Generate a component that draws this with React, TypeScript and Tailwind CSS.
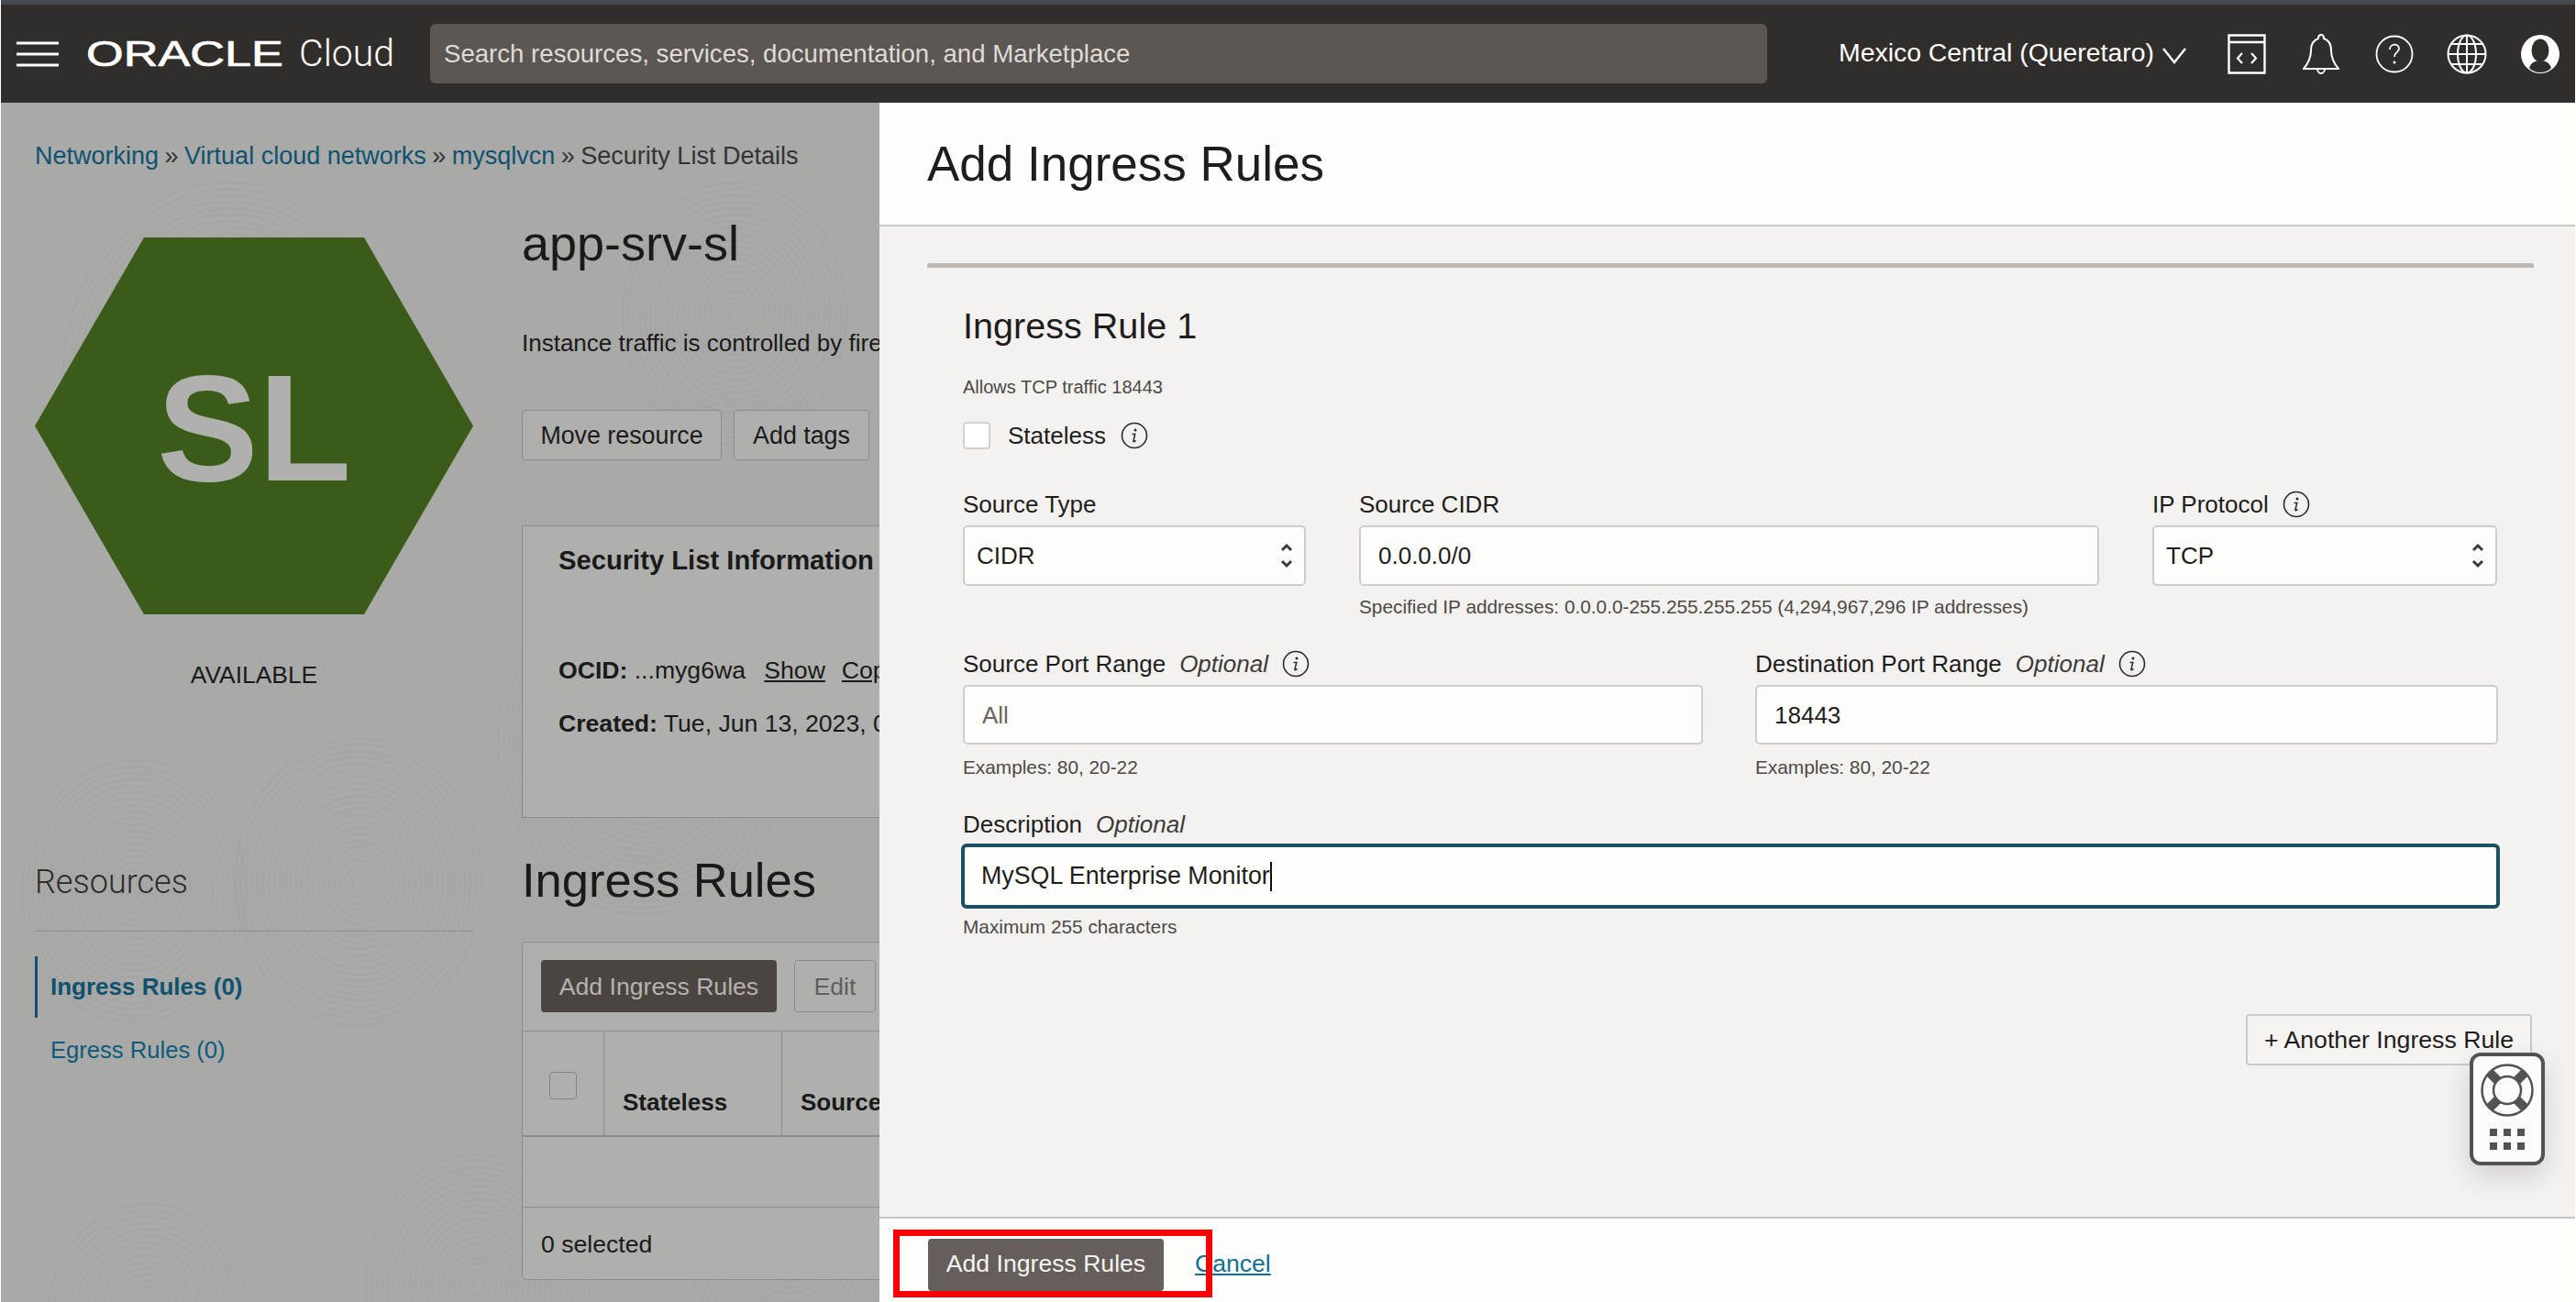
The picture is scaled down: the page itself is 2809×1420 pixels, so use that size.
const swirls = [
  { x: 145, y: 860, n: 20 },
  { x: 390, y: 850, n: 22 },
  { x: 160, y: 1330, n: 18 },
  { x: 520, y: 1290, n: 20 },
  { x: 700, y: 700, n: 26 },
  { x: 250, y: 300, n: 30 },
  { x: 860, y: 1240, n: 18 },
  { x: 800, y: 230, n: 20 },
];

function Swirls() {
  return (
    <svg className="absolute inset-0 h-full w-full" aria-hidden="true">
      {swirls.map((s) =>
        Array.from({ length: s.n }).map((_, i) => (
          <ellipse
            key={`${s.x}-${i}`}
            cx={s.x}
            cy={s.y}
            rx={8 + i * 6}
            ry={10 + i * 7}
            fill="none"
            stroke="#858583"
            strokeOpacity="0.07"
            strokeWidth="2.5"
          />
        )),
      )}
    </svg>
  );
}

function Info({ className = "" }: { className?: string }) {
  return (
    <svg viewBox="0 0 30 30" className={`h-[30px] w-[30px] shrink-0 ${className}`} aria-hidden="true">
      <circle cx="15" cy="15" r="13.5" fill="none" stroke="#2b2b2b" strokeWidth="1.6" />
      <circle cx="16" cy="9" r="1.5" fill="#2b2b2b" />
      <path d="M12.5 13.5h3.3l-1.9 7.5c-.2.9.9 1 2.6-.6" fill="none" stroke="#2b2b2b" strokeWidth="1.5" />
    </svg>
  );
}

function UpDown() {
  return (
    <svg viewBox="0 0 16 32" className="h-[32px] w-[16px]" aria-hidden="true">
      <path d="M3 10l5-5 5 5M3 22l5 5 5-5" fill="none" stroke="#3a3a3a" strokeWidth="3" />
    </svg>
  );
}

function Select({ value }: { value: string }) {
  return (
    <div className="flex h-[66px] items-center justify-between rounded-[5px] border-2 border-[#cfcdca] bg-[#fdfdfb] pl-[13px] pr-[11px] text-[26px] text-[#1f1d1b]">
      <span>{value}</span>
      <UpDown />
    </div>
  );
}

function Field({ value, placeholder }: { value?: string; placeholder?: string }) {
  return (
    <input
      readOnly
      value={value ?? ""}
      placeholder={placeholder}
      className="h-[65px] w-full rounded-[5px] border-2 border-[#cfcdca] bg-[#fdfdfb] px-[19px] pt-[2px] text-[26px] text-[#1f1d1b] outline-none placeholder:text-[#6b6560]"
    />
  );
}

function Label({ text, optional, info }: { text: string; optional?: boolean; info?: boolean }) {
  return (
    <div className="flex h-[34px] items-center text-[26px] leading-[34px] text-[#1f1d1b]">
      <span>{text}</span>
      {optional && <span className="ml-[15px] italic text-[#3d3a37]">Optional</span>}
      {info && <Info className="ml-[15px]" />}
    </div>
  );
}

function Hint({ children }: { children: string }) {
  return <div className="h-[26px] text-[20.8px] leading-[26px] text-[#4d4945]">{children}</div>;
}

function TopBar() {
  return (
    <header className="relative flex h-[112px] shrink-0 items-center border-t-[5px] border-[#454a50] bg-[#312d2a] text-white">
      <svg viewBox="0 0 46 28" className="ml-[17px] h-[28px] w-[46px]" aria-hidden="true">
        <path d="M0 2h46M0 14h46M0 26h46" stroke="#fff" strokeWidth="3" />
      </svg>
      <div className="ml-[30px] w-[219px] origin-left scale-x-[1.34] text-[39px] leading-none [-webkit-text-stroke:0.7px_white]">
        ORACLE
      </div>
      <div className="ml-[13px] w-[105px] font-['Roboto',sans-serif] text-[41px] font-light leading-none">Cloud</div>
      <div className="ml-[38px] flex h-[65px] w-[1458px] items-center rounded-[6px] bg-[#5c5753] pl-[15px] text-[27.6px] text-[#dedbd8]">
        Search resources, services, documentation, and Marketplace
      </div>
      <div className="mb-[2px] ml-[78px] text-[28.4px]">Mexico Central (Queretaro)</div>
      <svg viewBox="0 0 26 18" className="ml-[9px] mt-[4px] h-[18px] w-[26px]" aria-hidden="true">
        <path d="M1 1l12 15L25 1" fill="none" stroke="#fff" strokeWidth="2.4" />
      </svg>
      <svg viewBox="0 0 42 44" className="ml-[45px] h-[44px] w-[42px]" aria-hidden="true">
        <path d="M1.500 1.500h39v41h-39zM1.500 9h39" fill="none" stroke="#fff" strokeWidth="2.400" />
        <path d="M16 21l-5 5.500 5 5.500M26 21l5 5.500-5 5.500" fill="none" stroke="#fff" strokeWidth="2.200" />
      </svg>
      <svg viewBox="0 0 40 44" className="ml-[40px] h-[44px] w-[40px]" aria-hidden="true">
        <path
          d="M20 1c-2 0-3 1.500-3 4-6 2-8 7-8 13 0 8-3 14-8 20h38c-5-6-8-12-8-20 0-6-2-11-8-13 0-2.500-1-4-3-4zM16 38c0 3 2 5 4 5s4-2 4-5"
          fill="none"
          stroke="#fff"
          strokeWidth="2"
        />
      </svg>
      <svg viewBox="0 0 42 42" className="ml-[39px] h-[42px] w-[42px]" aria-hidden="true">
        <circle cx="21" cy="21" r="19.500" fill="none" stroke="#fff" strokeWidth="1.800" />
        <path d="M16 16c0-7 10-7 10-1 0 4-5 4-5 9" fill="none" stroke="#fff" strokeWidth="1.800" />
        <circle cx="21" cy="30" r="1.500" fill="#fff" />
      </svg>
      <svg viewBox="0 0 44 44" className="ml-[36px] h-[44px] w-[44px]" aria-hidden="true">
        <g fill="none" stroke="#fff" strokeWidth="2">
          <circle cx="22" cy="22" r="20.500" />
          <ellipse cx="22" cy="22" rx="10" ry="20.500" />
          <path d="M22 1.500v41M1.500 22h41M5 11h34M5 33h34" />
        </g>
      </svg>
      <svg viewBox="0 0 42 42" className="ml-[37px] h-[42px] w-[42px]" aria-hidden="true">
        <circle cx="21" cy="21" r="21" fill="#fff" />
        <ellipse cx="21" cy="17" rx="9.500" ry="12.500" fill="#312d2a" />
        <path d="M9 36c2-6 7-8 12-8s10 2 12 8c-3 3.500-7 5-12 5s-9-1.500-12-5z" fill="#312d2a" />
      </svg>
    </header>
  );
}

function PageBehind() {
  return (
    <div className="relative w-[958px] shrink-0 overflow-hidden bg-[#a9a9a7] pl-[37px] pt-[41px] text-[#1a1a1a]">
      <Swirls />
      <div className="relative">
        <nav className="flex h-[34px] items-center whitespace-nowrap text-[27px] leading-[34px]">
          <span className="text-[#0e5270]">Networking</span>
          <span className="mx-[6.5px] text-[#333]">»</span>
          <span className="text-[#0e5270]">Virtual cloud networks</span>
          <span className="mx-[6.5px] text-[#333]">»</span>
          <span className="text-[#0e5270]">mysqlvcn</span>
          <span className="mx-[6.5px] text-[#333]">»</span>
          <span className="text-[#333]">Security List Details</span>
        </nav>

        <div className="mt-[51px] flex gap-[53px]">
          <aside className="w-[478px] shrink-0 pt-[21px]">
            <div className="relative h-[411px] w-[478px]">
              <svg viewBox="0 0 478 411" className="h-full w-full" aria-hidden="true">
                <polygon points="119,0 359,0 478,205.500 359,411 119,411 0,205.500" fill="#3a5c18" />
              </svg>
              <div className="absolute inset-0 flex items-center justify-center pt-[4px] text-[166px] font-bold leading-none text-[#b0b0ae]">
                SL
              </div>
            </div>
            <div className="mt-[49px] h-[34px] text-center text-[26.4px] leading-[34px]">AVAILABLE</div>
            <div className="mt-[187px] h-[44px] font-['Roboto',sans-serif] text-[36px] font-light leading-[44px] text-[#2c2c2a]">
              Resources
            </div>
            <div className="mt-[31px] h-px bg-[#8f8f8d]" />
            <div className="mt-[27px] flex h-[67px] items-center border-l-[3px] border-[#0e5270] pl-[14px] text-[26px] font-bold text-[#0e5270]">
              Ingress Rules (0)
            </div>
            <div className="flex h-[70px] items-center pl-[17px] text-[25.6px] text-[#0e5a7c]">Egress Rules (0)</div>
          </aside>

          <main className="w-[800px] shrink-0">
            <h1 className="h-[54px] text-[54px] leading-[54px]">app-srv-sl</h1>
            <p className="mt-[65px] h-[34px] whitespace-nowrap text-[26px] leading-[34px]">
              Instance traffic is controlled by firewall rules
            </p>
            <div className="mt-[56px] flex h-[55px] gap-[13px] text-[26.8px]">
              <div className="flex w-[218px] items-center justify-center rounded-[4px] border border-[#8c8c8a] bg-[#afafad] pt-[2px]">
                Move resource
              </div>
              <div className="flex w-[148px] items-center justify-center rounded-[4px] border border-[#8c8c8a] bg-[#afafad] pt-[2px]">
                Add tags
              </div>
            </div>
            <section className="mt-[71px] h-[319px] border border-[#8c8c8a] bg-[#afafad] pl-[39px] pt-[17px]">
              <h2 className="h-[40px] text-[29.2px] font-bold leading-[40px]">Security List Information</h2>
              <div className="mt-[83px] h-[34px] whitespace-nowrap text-[26.6px] leading-[34px]">
                <b>OCID:</b> ...myg6wa <span className="ml-[13px] underline">Show</span>
                <span className="ml-[18px] underline">Copy</span>
              </div>
              <div className="mt-[24px] h-[34px] whitespace-nowrap text-[26.6px] leading-[34px]">
                <b>Created:</b> Tue, Jun 13, 2023, 01:22:15 UTC
              </div>
            </section>
            <h2 className="mt-[38px] h-[60px] text-[52.5px] leading-[60px]">Ingress Rules</h2>
            <section className="mt-[37px] h-[369px] rounded-[4px] border border-[#8c8c8a] bg-[#afafad]">
              <div className="flex h-[96px] gap-[19px] pl-[20px] pt-[19px] text-[26.6px]">
                <div className="flex h-[57px] w-[257px] items-center justify-center rounded-[4px] bg-[#4b4542] pt-[2px] text-[#b6b3b0]">
                  Add Ingress Rules
                </div>
                <div className="flex h-[57px] w-[89px] items-center justify-center rounded-[4px] border border-[#8c8c8a] pt-[2px] text-[#5f5f5d]">
                  Edit
                </div>
              </div>
              <div className="flex h-[116px] border-b-2 border-t border-[#8c8c8a] text-[26px] font-bold">
                <div className="relative w-[89px] border-r border-[#8c8c8a]">
                  <div className="absolute left-[29px] top-[44px] h-[30px] w-[30px] rounded-[4px] border border-[#858583]" />
                </div>
                <div className="flex w-[194px] items-end border-r border-[#8c8c8a] pb-[16px] pl-[20px]">Stateless</div>
                <div className="flex items-end pb-[16px] pl-[20px]">Source</div>
              </div>
              <div className="h-[77px] border-b border-[#8c8c8a]" />
              <div className="flex h-[78px] items-center pl-[20px] pt-[4px] text-[26.6px]">0 selected</div>
            </section>
          </main>
        </div>
      </div>
    </div>
  );
}

function RulesPanel() {
  return (
    <div className="flex min-w-0 flex-1 flex-col text-[#1f1d1b]">
      <div className="flex h-[135px] shrink-0 items-center border-b-2 border-[#cbc9c6] bg-[#fdfdfb] pl-[52px]">
        <h2 className="text-[53px] leading-[64px]">Add Ingress Rules</h2>
      </div>
      <div className="relative flex-1 bg-[#f3f2f1] pl-[52px] pr-[45px] pt-[40px]">
        <div className="h-[5px] rounded-t-[3px] bg-[#bdb8b3]" />
        <div className="px-[39px]">
          <h3 className="mt-[38px] h-[50px] text-[39.6px] leading-[50px]">Ingress Rule 1</h3>
          <p className="mt-[29px] h-[26px] text-[20px] leading-[26px] text-[#4d4945]">Allows TCP traffic 18443</p>
          <div className="mt-[25px] flex h-[30px] items-center text-[26px]">
            <div className="h-[30px] w-[30px] rounded-[4px] border-2 border-[#d3d1ce] bg-white" />
            <span className="ml-[19px]">Stateless</span>
            <Info className="ml-[16px]" />
          </div>

          <div className="mt-[43px] grid grid-cols-[374px_807px_376px] gap-x-[58px]">
            <div>
              <Label text="Source Type" />
              <div className="mt-[6px]">
                <Select value="CIDR" />
              </div>
            </div>
            <div>
              <Label text="Source CIDR" />
              <input
                readOnly
                value="0.0.0.0/0"
                className="mt-[6px] h-[66px] w-full rounded-[5px] border-2 border-[#cfcdca] bg-[#fdfdfb] px-[19px] text-[26px] outline-none"
              />
              <div className="mt-[10px]">
                <Hint>Specified IP addresses: 0.0.0.0-255.255.255.255 (4,294,967,296 IP addresses)</Hint>
              </div>
            </div>
            <div>
              <Label text="IP Protocol" info />
              <div className="mt-[6px]">
                <Select value="TCP" />
              </div>
            </div>
          </div>

          <div className="mt-[32px] grid grid-cols-[807px_1fr] gap-x-[57px]">
            <div>
              <Label text="Source Port Range" optional info />
              <div className="mb-[12px] mt-[6px]">
                <Field placeholder="All" />
              </div>
              <Hint>Examples: 80, 20-22</Hint>
            </div>
            <div>
              <Label text="Destination Port Range" optional info />
              <div className="mb-[12px] mt-[6px]">
                <Field value="18443" />
              </div>
              <Hint>Examples: 80, 20-22</Hint>
            </div>
          </div>

          <div className="mt-[32px]">
            <Label text="Description" optional />
            <div className="-mx-[2px] mt-[4px] flex h-[71px] items-center rounded-[6px] border-[4px] border-[#1d4f63] bg-[#fdfdfb] pl-[18px] text-[26.8px]">
              <span>MySQL Enterprise Monitor</span>
              <span className="h-[32px] w-[2px] bg-[#111]" />
            </div>
            <div className="mt-[7px]">
              <Hint>Maximum 255 characters</Hint>
            </div>
          </div>
        </div>

        <div className="mt-[82px] flex justify-end pr-[2px]">
          <div className="flex h-[56px] w-[312px] items-center justify-center rounded-[4px] border-2 border-[#cbc9c6] bg-[#f5f4f3] text-[26.7px]">
            + Another Ingress Rule
          </div>
        </div>

        <div className="absolute left-[1734px] top-[901px] flex h-[123px] w-[82px] flex-col items-center rounded-[12px] border-[4px] border-[#555350] bg-[#fcfcfa] pt-[8px] shadow-[0_12px_30px_rgba(0,0,0,0.14)]">
          <svg viewBox="0 0 58 58" className="h-[58px] w-[58px]" aria-hidden="true">
            <circle cx="29" cy="29" r="27.500" fill="#fcfcfa" stroke="#555350" strokeWidth="2.500" />
            <path d="M10 10l11 11M48 10L37 21M10 48l11-11M48 48L37 37" stroke="#555350" strokeWidth="10" />
            <circle cx="29" cy="29" r="15" fill="#fcfcfa" stroke="#555350" strokeWidth="2.500" />
          </svg>
          <div className="mt-[13px] grid grid-cols-3 gap-x-[7px] gap-y-[7px]">
            {Array.from({ length: 6 }).map((_, i) => (
              <div key={i} className="h-[8px] w-[8px] bg-[#555350]" />
            ))}
          </div>
        </div>
      </div>
      <div className="flex h-[93px] shrink-0 items-center border-t-2 border-[#c9c5c1] bg-[#fdfdfb] pl-[53px] pt-[9px] text-[26.6px]">
        <div className="flex h-[57px] w-[257px] items-center justify-center rounded-[4px] bg-[#655e5a] text-[#f5f4f3]">
          Add Ingress Rules
        </div>
        <a className="ml-[34px] text-[#0f6f94] underline">Cancel</a>
      </div>
      <div className="absolute left-[974px] top-[1341px] h-[74px] w-[348px] border-[7px] border-[#ff0000]" />
    </div>
  );
}

export default function App() {
  return (
    <div className="relative h-[1420px] w-[2809px] overflow-hidden bg-white px-px font-['Liberation_Sans',Arial,sans-serif]">
      <div className="flex h-full flex-col">
        <TopBar />
        <div className="flex min-h-0 flex-1">
          <PageBehind />
          <RulesPanel />
        </div>
      </div>
    </div>
  );
}
